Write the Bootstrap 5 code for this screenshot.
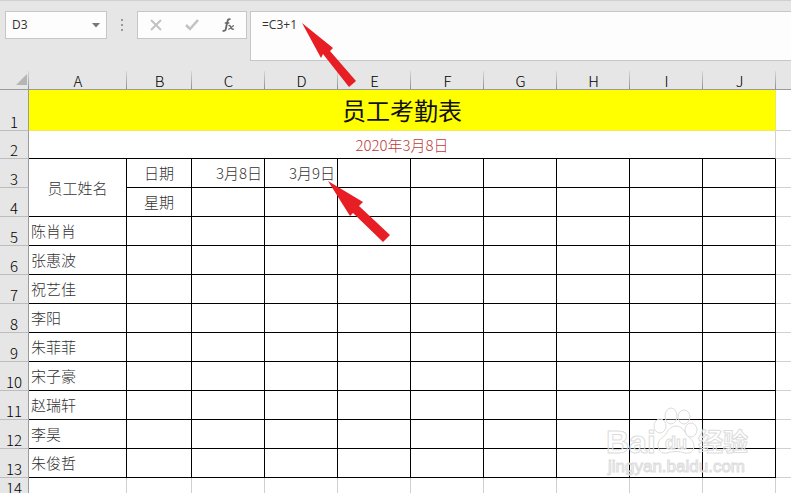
<!DOCTYPE html>
<html lang="zh-CN">
<head>
<meta charset="utf-8">
<meta name="viewport" content="width=device-width, initial-scale=1">
<title>员工考勤表</title>
<link href="https://cdn.jsdelivr.net/npm/bootstrap@5.3.0/dist/css/bootstrap.min.css" rel="stylesheet">
<style>
  body { background: #fff; font-family: "Noto Sans CJK SC", sans-serif; }
  .toolbar { background: #e6e6e6; border-top: 1px solid #d0d0d0; padding: 10px 0 0 5px; }
  .tool-box { height: 28px; background: #fdfdfd; border: 1px solid #c6c6c6; }
  .name-box { width: 102px; }
  .name-input, .formula { font: 12px/16px "Open Sans", sans-serif; color: #333; background: transparent; outline: 0; }
  .name-input { padding: 0 0 0 6px; min-width: 0; width: 60px; }
  .drop-btn { width: 20px; }
  .dots { width: 30px; height: 28px; }
  .fx-box { width: 110px; margin-right: 3px; }
  .fx-box button { width: 36px; }
  .formula { height: 50px; min-width: 0; resize: none; border: 1px solid #c6c6c6; border-right: 0; background: #fdfdfd; padding: 5px 11px; border-radius: 0; }
  .sheet { table-layout: fixed; border-collapse: separate; border-spacing: 0; font-size: 15px; font-weight: 300; line-height: 20px; color: #333; }
  .sheet th, .sheet td { padding: 0 2px; height: 29px; border: 0 solid #d0d0d0; border-width: 0 1px 1px 0; vertical-align: middle; overflow: hidden; white-space: nowrap; }
  .sheet .spare { border-right: 0; }
  .sheet thead th { background: #e6e6e6 linear-gradient(#d8d8d8, #8f8f8f) no-repeat right bottom / 1px 18px; border-width: 0 0 1px; border-color: #9b9b9b; vertical-align: bottom; text-align: center; font-weight: 300; color: #000; line-height: 16px; }
  .sheet thead .spare { background-image: none; }
  .sheet tbody th { background: #e6e6e6; border-right-color: #9b9b9b; border-bottom-color: #bdbdbd; vertical-align: bottom; text-align: center; font-weight: 300; color: #000; padding: 0; line-height: 16px; }
  .sheet .r1 > * { height: 41px; }
  .sheet .r2 > * { height: 28px; }
  .sheet .r14 > * { height: 19px; }
  .sheet td.ink { border-color: #000; }
  .sheet td.banner { background: #ff0; font-size: 24px; line-height: 36px; font-weight: 400; color: #111; border-color: #eee85a; }
  .sheet td.today { color: #c0393b; border-bottom-color: #000; }
  .c-head { width: 29px; } .c-a { width: 98px; } .c-b { width: 65px; } .c-day { width: 73px; }
  .overlay { width: 791px; height: 493px; pointer-events: none; }
</style>
<script src="https://cdn.jsdelivr.net/npm/bootstrap@5.3.0/dist/js/bootstrap.bundle.min.js"></script>
</head>
<body>
<main class="position-relative vh-100 overflow-hidden">
  <div class="toolbar d-flex align-items-start">
    <div class="tool-box name-box d-flex">
      <input class="name-input border-0 flex-grow-1" type="text" value="D3" aria-label="名称框">
      <button class="drop-btn btn border-0 p-0 flex-shrink-0 d-flex align-items-center justify-content-center" type="button" aria-label="展开名称框"><svg width="8" height="5"><path d="M0 0h8L4 4.500z" fill="#777"/></svg></button>
    </div>
    <div class="dots d-flex align-items-center justify-content-center"><svg width="2" height="12" fill="#999"><path d="M0 0h2v2H0zM0 5h2v2H0zM0 10h2v2H0z"/></svg></div>
    <div class="tool-box fx-box d-flex">
      <button class="btn border-0 p-0 d-flex align-items-center justify-content-center" type="button" aria-label="取消"><svg width="12" height="12" fill="none" stroke="#c2c2c2" stroke-width="2"><path d="M1 1l10 10M11 1L1 11"/></svg></button>
      <button class="btn border-0 p-0 d-flex align-items-center justify-content-center" type="button" aria-label="输入"><svg width="14" height="12" fill="none" stroke="#c2c2c2" stroke-width="2.500"><path d="M1 6l4 4L13 1"/></svg></button>
      <button class="btn border-0 p-0 d-flex align-items-center justify-content-center" type="button" aria-label="插入函数"><svg width="13" height="14" fill="none" stroke="#666"><path stroke-width="1.800" d="M8.500 1.500C6.500.4 5.700 1.800 5.300 4L3.900 10.500C3.500 12.500 2.500 13.500.6 12.500"/><path stroke-width="1.300" d="M2.800 5h4.500M6.500 7.600c2-.6 2 .8 2.600 2.200s1 2 2.900 1.200M12 7.700c-2 0-3.300 3.600-5.700 3.600"/></svg></button>
    </div>
    <textarea class="formula flex-grow-1 d-block" aria-label="编辑栏">=C3+1</textarea>
  </div>

  <table class="sheet w-100">
    <colgroup><col class="c-head"><col class="c-a"><col class="c-b"><col class="c-day" span="8"><col></colgroup>
    <thead>
      <tr><th class="text-end" aria-label="全选"><svg class="d-block ms-auto mb-1" width="11" height="11"><path d="M11 0v11H0z" fill="#b5b5b5"/></svg></th><th>A</th><th>B</th><th>C</th><th>D</th><th>E</th><th>F</th><th>G</th><th>H</th><th>I</th><th>J</th><th class="spare"></th></tr>
    </thead>
    <tbody>
      <tr class="r1"><th>1</th><td class="banner text-center" colspan="10">员工考勤表</td><td class="spare"></td></tr>
      <tr class="r2"><th>2</th><td class="today text-center" colspan="10">2020年3月8日</td><td class="spare"></td></tr>
      <tr><th>3</th><td class="ink text-center" rowspan="2">员工姓名</td><td class="ink text-center">日期</td><td class="ink text-end">3月8日</td><td class="ink text-end">3月9日</td><td class="ink"></td><td class="ink"></td><td class="ink"></td><td class="ink"></td><td class="ink"></td><td class="ink"></td><td class="spare"></td></tr>
      <tr><th>4</th><td class="ink text-center">星期</td><td class="ink"></td><td class="ink"></td><td class="ink"></td><td class="ink"></td><td class="ink"></td><td class="ink"></td><td class="ink"></td><td class="ink"></td><td class="spare"></td></tr>
      <tr><th>5</th><td class="ink">陈肖肖</td><td class="ink"></td><td class="ink"></td><td class="ink"></td><td class="ink"></td><td class="ink"></td><td class="ink"></td><td class="ink"></td><td class="ink"></td><td class="ink"></td><td class="spare"></td></tr>
      <tr><th>6</th><td class="ink">张惠波</td><td class="ink"></td><td class="ink"></td><td class="ink"></td><td class="ink"></td><td class="ink"></td><td class="ink"></td><td class="ink"></td><td class="ink"></td><td class="ink"></td><td class="spare"></td></tr>
      <tr><th>7</th><td class="ink">祝艺佳</td><td class="ink"></td><td class="ink"></td><td class="ink"></td><td class="ink"></td><td class="ink"></td><td class="ink"></td><td class="ink"></td><td class="ink"></td><td class="ink"></td><td class="spare"></td></tr>
      <tr><th>8</th><td class="ink">李阳</td><td class="ink"></td><td class="ink"></td><td class="ink"></td><td class="ink"></td><td class="ink"></td><td class="ink"></td><td class="ink"></td><td class="ink"></td><td class="ink"></td><td class="spare"></td></tr>
      <tr><th>9</th><td class="ink">朱菲菲</td><td class="ink"></td><td class="ink"></td><td class="ink"></td><td class="ink"></td><td class="ink"></td><td class="ink"></td><td class="ink"></td><td class="ink"></td><td class="ink"></td><td class="spare"></td></tr>
      <tr><th>10</th><td class="ink">宋子豪</td><td class="ink"></td><td class="ink"></td><td class="ink"></td><td class="ink"></td><td class="ink"></td><td class="ink"></td><td class="ink"></td><td class="ink"></td><td class="ink"></td><td class="spare"></td></tr>
      <tr><th>11</th><td class="ink">赵瑞轩</td><td class="ink"></td><td class="ink"></td><td class="ink"></td><td class="ink"></td><td class="ink"></td><td class="ink"></td><td class="ink"></td><td class="ink"></td><td class="ink"></td><td class="spare"></td></tr>
      <tr><th>12</th><td class="ink">李昊</td><td class="ink"></td><td class="ink"></td><td class="ink"></td><td class="ink"></td><td class="ink"></td><td class="ink"></td><td class="ink"></td><td class="ink"></td><td class="ink"></td><td class="spare"></td></tr>
      <tr><th>13</th><td class="ink">朱俊哲</td><td class="ink"></td><td class="ink"></td><td class="ink"></td><td class="ink"></td><td class="ink"></td><td class="ink"></td><td class="ink"></td><td class="ink"></td><td class="ink"></td><td class="spare"></td></tr>
      <tr class="r14"><th>14</th><td></td><td></td><td></td><td></td><td></td><td></td><td></td><td></td><td></td><td></td><td class="spare"></td></tr>
    </tbody>
  </table>

  <svg class="overlay position-absolute top-0 start-0" viewBox="0 0 791 493">
    <g fill="#e81e25">
      <path d="M302 23L333 48L330 51L356 81L349 87L323 54L321 58z"/>
      <path d="M328 181L363 202L359 206L390 235L383 242L353 213L350 216z"/>
    </g>
    <g fill="#fff" fill-opacity=".25" stroke="#dcdcdc" stroke-width="1">
      <ellipse cx="671" cy="416" rx="6" ry="8"/><ellipse cx="684" cy="417" rx="6" ry="7"/><ellipse cx="660" cy="426" rx="6" ry="7"/><ellipse cx="691" cy="430" rx="6" ry="7"/>
      <path d="M676 426c5 0 8 4 10 8 3 4 8 6 8 12 0 5-4 8-9 7-6-2-12-2-18 0-6 1-9-3-9-8 0-6 5-7 8-11 2-4 5-8 10-8z"/>
      <text x="606" y="453" font-family="Liberation Sans, sans-serif" font-weight="700" font-size="32">Bai</text>
      <text x="665" y="449" font-family="Liberation Sans, sans-serif" font-weight="700" font-size="18">du</text>
      <text x="698" y="451" font-family="Noto Sans CJK SC, sans-serif" font-weight="700" font-size="25">经验</text>
      <text x="608" y="472" font-family="Liberation Sans, sans-serif" font-size="17">jingyan.baidu.com</text>
    </g>
  </svg>
</main>
</body>
</html>
